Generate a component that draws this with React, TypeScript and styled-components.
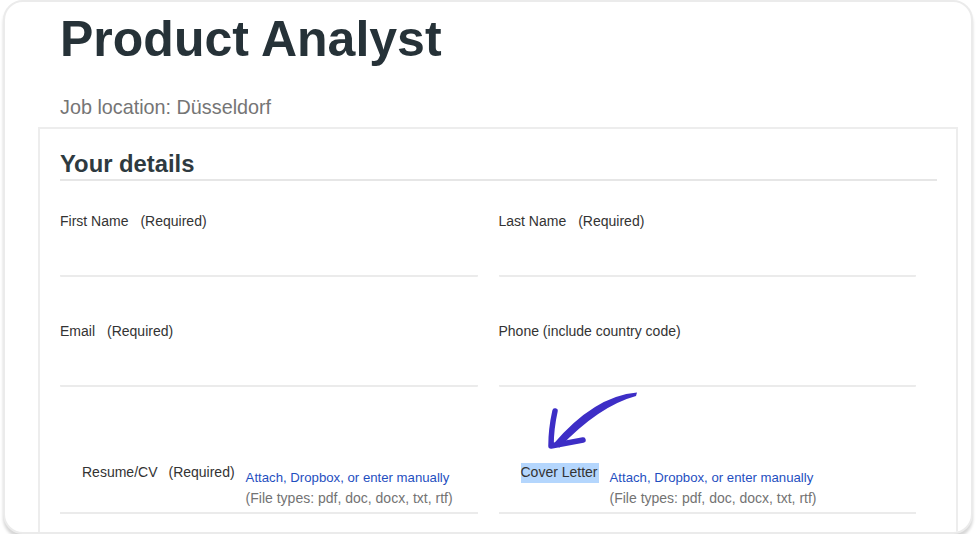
import styled, { createGlobalStyle } from 'styled-components';

const GlobalStyle = createGlobalStyle`
  html, body {
    margin: 0;
    padding: 0;
    background: #ffffff;
    font-family: 'Liberation Sans', Arial, Helvetica, sans-serif;
  }
`;

const Card = styled.div`
  box-sizing: border-box;
  margin: 0 4px 0 3px;
  height: 534px;
  border: 2px solid #ebebeb;
  border-radius: 20px;
  background: #fff;
  box-shadow: 0 4px 3px rgba(0, 0, 0, 0.16);
  overflow: hidden;
  padding: 0 13px 0 33px;
`;

const Header = styled.header`
  padding: 13px 0 0 22px;
`;

const Title = styled.h1`
  margin: 0;
  font-size: 50px;
  line-height: 49px;
  font-weight: 700;
  color: #263238;
`;

const Location = styled.p`
  margin: 31px 0 0;
  font-size: 19.8px;
  line-height: 24px;
  color: #757575;
`;

const FormBox = styled.section`
  position: relative;
  box-sizing: border-box;
  margin-top: 8px;
  min-height: 420px;
  border: 2px solid #ededed;
  border-bottom: none;
  padding: 21px 19px 0 20px;
`;

const SectionTitle = styled.h2`
  margin: 0;
  padding-bottom: 1px;
  font-size: 23.8px;
  line-height: 28px;
  font-weight: 700;
  color: #2e3a40;
  border-bottom: 2px solid #e6e6e6;
`;

const Grid = styled.div`
  display: grid;
  grid-template-columns: 1fr 1fr;
  row-gap: 46px;
  margin-top: 32px;
`;

const Field = styled.div`
  position: relative;
  padding-right: 21px;
`;

const Label = styled.label`
  display: block;
  font-size: 14px;
  line-height: 17px;
  color: #333;
`;

const Required = styled.span`
  margin-left: 12px;
`;

const Input = styled.div`
  height: 45px;
  border-bottom: 2px solid #ebebeb;
  border-radius: 1px;
`;

const FileRow = styled.div`
  display: flex;
  align-items: flex-start;
  padding: 31px 0 4px 22px;
  border-bottom: 2px solid #ebebeb;
`;

const FileLabel = styled.span<{ $selected?: boolean }>`
  margin-right: 11px;
  font-size: 14px;
  line-height: 17px;
  color: #333;
  background: ${p => (p.$selected ? '#b4d6fd' : 'transparent')};
  padding: ${p => (p.$selected ? '1px 1px 2px 0' : '0')};
  margin-top: ${p => (p.$selected ? '-1px' : '0')};
`;

const FileInfo = styled.div`
  display: flex;
  flex-direction: column;
  margin-top: 4px;
  line-height: 20px;
`;

const Link = styled.a`
  font-size: 13.2px;
  color: #1f4fbf;
  text-decoration: none;
`;

const Hint = styled.span`
  font-size: 14px;
  color: #737373;
`;

const Arrow = styled.svg`
  position: absolute;
  left: 43px;
  top: -44px;
  width: 100px;
  height: 66px;
  overflow: visible;
`;

function CurvedArrow() {
  return (
    <Arrow viewBox='0 0 100 66'>
      <path
        d='M95 3.5 Q52 7 10.5 56 L17.5 58.5 Q57 17 94 7 Z'
        fill='#3d2ec6'
      />
      <path
        d='M13 22 Q9 40 9 57 L41 51'
        fill='none'
        stroke='#3d2ec6'
        strokeWidth={5.5}
        strokeLinecap='round'
        strokeLinejoin='round'
      />
    </Arrow>
  );
}

function TextField({ label, required }: { label: string; required?: boolean }) {
  return (
    <Field>
      <Label>
        {label}
        {required && <Required>(Required)</Required>}
      </Label>
      <Input />
    </Field>
  );
}

function FileField({
  label,
  required,
  selected,
  annotated,
}: {
  label: string;
  required?: boolean;
  selected?: boolean;
  annotated?: boolean;
}) {
  return (
    <Field>
      {annotated && <CurvedArrow />}
      <FileRow>
        <FileLabel $selected={selected}>{label}</FileLabel>
        {required && <FileLabel>(Required)</FileLabel>}
        <FileInfo>
          <Link href='#'>Attach, Dropbox, or enter manually</Link>
          <Hint>(File types: pdf, doc, docx, txt, rtf)</Hint>
        </FileInfo>
      </FileRow>
    </Field>
  );
}

export default function App() {
  return (
    <>
      <GlobalStyle />
      <Card>
        <Header>
          <Title>Product Analyst</Title>
          <Location>Job location: Düsseldorf</Location>
        </Header>
        <FormBox>
          <SectionTitle>Your details</SectionTitle>
          <Grid>
            <TextField label='First Name' required />
            <TextField label='Last Name' required />
            <TextField label='Email' required />
            <TextField label='Phone (include country code)' />
            <FileField label='Resume/CV' required />
            <FileField label='Cover Letter' selected annotated />
          </Grid>
        </FormBox>
      </Card>
    </>
  );
}
